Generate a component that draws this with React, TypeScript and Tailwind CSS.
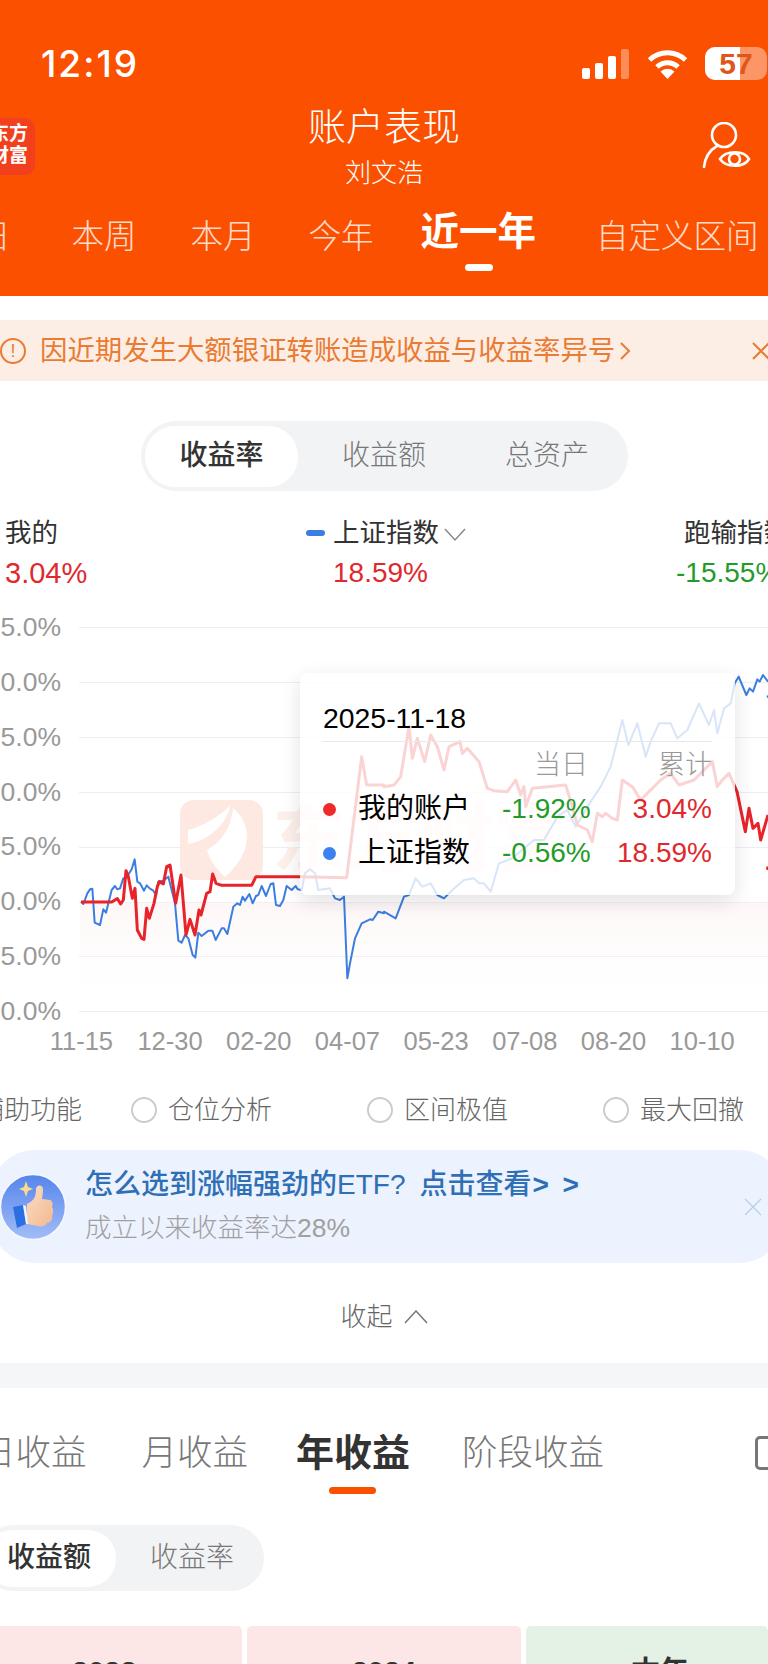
import React from "react";

const redLeft = "243,876 335,876 352,866 362,882 370,870 378,782 385,800 397,865 405,835 412,960 425,985 432,988 440,895 448,925 462,880 472,830 478,815 490,822 500,770 510,765 527,880 543,795 558,975 570,928 585,975 597,900 603,915 620,850 630,845 638,792 648,820 665,826 755,826 768,800 900,800 1040,803 1085,440 1100,525 1152,525";
const redRight: number[][] = [[0,530],[30,525],[50,500],[75,350],[85,445],[100,385],[122,455],[140,375],[160,410],[180,480],[195,410],[228,395],[235,430],[250,415],[285,455],[310,535],[330,542],[370,545],[395,510],[410,555],[420,530],[425,590],[445,535],[545,525],[565,590],[580,645],[610,660],[625,695],[640,610],[655,620],[665,610],[685,625],[700,630],[715,510],[745,530],[770,570],[790,550],[830,510],[860,490],[885,525],[930,510],[985,455],[1000,530],[1015,510],[1035,490],[1059,545],[1084,665],[1095,595],[1107,655],[1122,640],[1130,690],[1152,615]];
const blueLeft = "243,875 250,882 262,850 270,838 277,836 284,938 300,945 310,898 318,908 335,840 345,828 352,838 360,835 370,805 380,802 395,778 404,748 412,815 420,820 432,842 440,826 450,836 460,842 468,855 475,815 490,812 505,800 515,840 525,880 535,992 545,998 555,975 565,985 578,1035 586,1043 595,968 605,978 625,962 637,962 647,990 665,955 672,955 682,972 700,890 712,880 720,885 728,860 735,872 748,852 758,880 768,858 775,855 785,828 798,858 812,822 820,820 828,885 840,888 850,870 860,828 875,840 887,828 893,838 905,840 915,790 930,778 945,790 955,840 990,835 1005,865 1020,870 1032,860 1042,1105 1050,1060 1065,985 1085,940 1110,928 1118,930 1135,905 1152,910";
const blueRight: number[][] = [[0,905],[35,925],[60,860],[75,855],[95,805],[115,830],[140,820],[160,855],[180,865],[205,840],[240,810],[270,805],[285,820],[300,820],[320,845],[345,760],[385,745],[450,690],[480,690],[520,620],[550,600],[575,650],[620,575],[650,530],[680,470],[715,330],[733,405],[760,340],[785,440],[800,395],[825,340],[860,340],[880,385],[910,360],[945,280],[975,345],[990,300],[1000,370],[1020,295],[1040,280],[1052,220],[1064,200],[1087,255],[1097,235],[1107,245],[1120,208],[1127,215],[1137,195],[1152,215]];
const shift = (p: number[][]) => p.map(([x, y]) => `${x + 1152},${y}`).join(" ");

const yLabels = ["25.0%", "20.0%", "15.0%", "10.0%", "5.0%", "0.0%", "-5.0%", "-10.0%"];
const xLabels = ["11-15", "12-30", "02-20", "04-07", "05-23", "07-08", "08-20", "10-10"];

function Wifi() {
  return (
    <svg width="41" height="30" viewBox="0 0 41 30" fill="none" stroke="white" strokeWidth="5">
      <path d="M2.5 11 A 26 26 0 0 1 38.5 11" />
      <path d="M10 18 A 15 15 0 0 1 31 18" />
      <path d="M20.5 30 L13.5 22.5 A 10 10 0 0 1 27.5 22.5 Z" fill="white" stroke="none" />
    </svg>
  );
}

function ThumbIcon() {
  return (
    <svg width="66" height="66" viewBox="0 0 66 66" className="shrink-0">
      <defs>
        <linearGradient id="thumbBg" x1="0" y1="0" x2="0" y2="1">
          <stop offset="0" stopColor="#5585ec" />
          <stop offset="1" stopColor="#a3bdf8" />
        </linearGradient>
        <linearGradient id="skin" x1="0" y1="0" x2="1" y2="1">
          <stop offset="0" stopColor="#fbdcc0" />
          <stop offset="1" stopColor="#f2b993" />
        </linearGradient>
      </defs>
      <circle cx="33" cy="33" r="32.5" fill="url(#thumbBg)" stroke="#f5f8ff" strokeWidth="1.5" />
      <path d="M26 7 L28 13 L33 15 L28 17 L26 23 L24 17 L19 15 L24 13 Z" fill="#f9dd8a" />
      <path d="M27 30 C33 27 36 24 36 15 C37 10 43 11 43 15 C43 20 42 23 42 25 L50 26 C53 27 53 31 52 33 C54 36 53 40 52 42 C53 46 50 49 47 49 C46 52 42 53 38 52 L27 50 Z" fill="url(#skin)" />
      <path d="M13 33 L23 31 L26 50 L17 54 Z" fill="#2c6fe3" />
      <path d="M23 31 L26 32 L28 50 L26 50 Z" fill="#eef4ff" />
    </svg>
  );
}

function PersonEye() {
  return (
    <svg width="50" height="50" viewBox="0 0 50 50" fill="none" stroke="white" strokeWidth="2.6" strokeLinecap="round">
      <circle cx="22" cy="13" r="12" />
      <path d="M15 24 C8 28 3 36 2 45" />
      <path d="M18 37 C24 28 42 28 47 37 C42 46 24 46 18 37 Z" fill="#fa5000" />
      <circle cx="32.5" cy="37" r="5.5" />
    </svg>
  );
}

export default function App() {
  return (
    <div className="relative w-[768px] h-[1664px] overflow-hidden bg-white font-['Liberation_Sans','Noto_Sans_CJK_SC',sans-serif]">
      {/* Header */}
      <header className="h-[296px] bg-[#fa5000] text-white pt-[47px]">
        <div className="flex items-center h-[33px]">
          <span className="ml-[41px] font-['Inter'] text-[37px] leading-[33px] font-medium tracking-[2px]">12:19</span>
          <div className="ml-auto flex items-end gap-[5px] h-[30px]">
            <span className="w-[8px] h-[11px] rounded-[2px] bg-white" />
            <span className="w-[8px] h-[16px] rounded-[2px] bg-white" />
            <span className="w-[8px] h-[23px] rounded-[2px] bg-white" />
            <span className="w-[8px] h-[30px] rounded-[2px] bg-white/35" />
          </div>
          <div className="ml-[18px]"><Wifi /></div>
          <div className="relative ml-[17px] mr-[1px] w-[62px] h-[33px] rounded-[10px] bg-white/40 overflow-hidden">
            <div className="w-[35px] h-full bg-white" />
            <span className="absolute inset-0 flex items-center justify-center text-[30px] font-bold text-[#e0561a]">57</span>
          </div>
        </div>
        <div className="mt-[26px] grid grid-cols-[1fr_auto_1fr] items-start">
          <div className="mt-[12px] w-[55px] ml-[-20px] h-[57px] rounded-[10px] bg-[#f2401f] flex flex-col items-end pr-[7px] pt-[5px] text-[19px] leading-[22px] font-bold">
            <span className="whitespace-nowrap">东方</span>
            <span className="whitespace-nowrap">财富</span>
          </div>
          <div className="text-center">
            <div className="text-[38px] leading-[42px] font-light">账户表现</div>
            <div className="mt-[10px] text-[26px] leading-[30px] font-light">刘文浩</div>
          </div>
          <div className="mt-[16px] mr-[16px] justify-self-end"><PersonEye /></div>
        </div>
        <div className="mt-[24px] flex items-center h-[50px] whitespace-nowrap text-[32.5px] font-light text-white/80">
          <span className="ml-[-22px]">日</span>
          <span className="ml-[61px]">本周</span>
          <span className="ml-[54px]">本月</span>
          <span className="ml-[53px]">今年</span>
          <span className="ml-[47px] text-[38.5px] font-bold text-white -translate-y-[5px]">近一年</span>
          <span className="ml-[60px]">自定义区间</span>
        </div>
        <div className="ml-[465px] mt-[2px] w-[28px] h-[7px] rounded-full bg-white" />
      </header>

      {/* Notice */}
      <div className="mt-[24px] h-[61px] bg-[#fdeee5] flex items-center text-[#e97b33] whitespace-nowrap">
        <span className="w-[26px] h-[26px] rounded-full border-2 border-[#e97b33] flex items-center justify-center text-[18px] leading-none">!</span>
        <span className="ml-[14px] text-[27.4px]">因近期发生大额银证转账造成收益与收益率异号</span>
        <svg width="12" height="24" viewBox="0 0 12 24" fill="none" stroke="#e97b33" strokeWidth="2" className="ml-[4px]"><path d="M2 4 L10 12 L2 20" /></svg>
        <svg width="18" height="18" viewBox="0 0 18 18" fill="none" stroke="#e97b33" strokeWidth="2" className="ml-auto mr-[-2px]"><path d="M1 1 L17 17 M17 1 L1 17" /></svg>
      </div>

      {/* Segmented */}
      <div className="mt-[40px] ml-[141px] w-[487px] h-[70px] rounded-[35px] bg-[#f2f3f5] flex items-center text-[28px] text-[#777] whitespace-nowrap">
        <div className="ml-[4px] w-[153px] h-[61px] rounded-[30px] bg-white flex items-center justify-center font-medium text-[#333]">收益率</div>
        <span className="ml-[44px] font-light">收益额</span>
        <span className="ml-[79px] font-light">总资产</span>
      </div>

      {/* Legend */}
      <div className="mt-[24px] pl-[5px] grid grid-cols-[301px_370px_1fr] whitespace-nowrap text-[26.5px] leading-[36px] text-[#333]">
        <div>
          <div>我的</div>
          <div className="mt-[4px] text-[29px] text-[#e0282e]">3.04%</div>
        </div>
        <div>
          <div className="flex items-center">
            <span className="w-[19px] h-[6px] rounded-full bg-[#3b7de0]" />
            <span className="ml-[8px]">上证指数</span>
            <svg width="22" height="14" viewBox="0 0 22 14" fill="none" stroke="#888" strokeWidth="1.5" className="ml-[5px] mt-[4px]"><path d="M1 1 L11 12 L21 1" /></svg>
          </div>
          <div className="mt-[4px] ml-[27px] text-[28px] text-[#e0282e]">18.59%</div>
        </div>
        <div>
          <div className="ml-[8px]">跑输指数</div>
          <div className="mt-[4px] text-[28px] text-[#1f9c2a]">-15.55%</div>
        </div>
      </div>

      {/* Chart */}
      <div className="relative mt-[9.5px]">
        {yLabels.map((l) => (
          <div key={l} className="flex items-center h-[54.85px]">
            <div className="w-[61px] flex justify-end whitespace-nowrap text-[26.5px] text-[#999]">{l}</div>
            <div className="ml-[18px] flex-1 h-[1px] bg-[#eceef2]" />
          </div>
        ))}
        {/* watermark */}
        <div className="absolute left-[180px] top-[199px] w-[83px] h-[80px] rounded-[14px] bg-[#fde9e2]">
          <svg width="83" height="80" viewBox="0 0 83 80">
            <path d="M8 30 C25 26 40 15 50 6 C48 22 30 40 8 44 Z" fill="white" />
            <path d="M27 50 C42 42 52 25 53 8 C70 22 76 50 45 77 C38 70 30 62 27 50 Z" fill="white" />
          </svg>
        </div>
        <div className="absolute left-[272px] top-[194px] text-[74px] leading-[90px] font-bold text-[#fdf0ea] whitespace-nowrap">东方财富</div>

        <svg width="768" height="440" viewBox="0 0 2304 1320" fill="none" className="absolute left-0 top-[9.5px]">
          <defs>
            <linearGradient id="area" x1="0" y1="0" x2="0" y2="1">
              <stop offset="0" stopColor="#fdeeee" stopOpacity="0.5" />
              <stop offset="1" stopColor="#ffffff" stopOpacity="0" />
            </linearGradient>
          </defs>
          <rect x="240" y="877" width="2064" height="330" fill="url(#area)" />
          <polyline points={`${blueLeft} ${shift(blueRight)}`} stroke="#3b7de0" strokeWidth="6" strokeLinejoin="round" />
          <polyline points={`${redLeft} ${shift(redRight)}`} stroke="#e8232a" strokeWidth="9" strokeLinejoin="round" />
          <circle cx="2304" cy="775" r="6" fill="#e8232a" />
          <circle cx="2304" cy="260" r="4" fill="#3b7de0" />
        </svg>

        {/* Tooltip */}
        <div className="absolute left-[300px] top-[72.5px] w-[435px] h-[222px] rounded-[8px] bg-white/80 shadow-[0_6px_20px_rgba(0,0,0,0.12)] px-[23px] pt-[27px] text-black whitespace-nowrap">
          <div className="text-[28.4px] leading-[36px]">2025-11-18</div>
          <div className="mt-[5px] h-[1px] bg-[#e8e8e8]" />
          <div className="mt-[8px] grid grid-cols-[179px_89px_121px] text-[27px] leading-[30px] font-light text-[#999]">
            <span />
            <span className="text-right pr-[3px]">当日</span>
            <span className="text-right">累计</span>
          </div>
          <div className="mt-[9px] grid grid-cols-[179px_89px_121px] text-[28px] leading-[40px]">
            <span className="flex items-center"><span className="w-[13px] h-[13px] rounded-full bg-[#f02a2a]" /><span className="ml-[22px]">我的账户</span></span>
            <span className="text-[#1f9c2a]">-1.92%</span>
            <span className="text-right text-[#e0282e]">3.04%</span>
          </div>
          <div className="mt-[4px] grid grid-cols-[179px_89px_121px] text-[28px] leading-[40px]">
            <span className="flex items-center"><span className="w-[13px] h-[13px] rounded-full bg-[#3b82f0]" /><span className="ml-[22px]">上证指数</span></span>
            <span className="text-[#1f9c2a]">-0.56%</span>
            <span className="text-right text-[#e0282e]">18.59%</span>
          </div>
        </div>
      </div>

      {/* X labels */}
      <div className="mt-[-13px] ml-[37px] flex text-[25.5px] leading-[30px] text-[#999]">
        {xLabels.map((l) => (
          <span key={l} className="w-[88.7px] shrink-0 text-center">{l}</span>
        ))}
      </div>

      {/* Options */}
      <div className="mt-[39px] h-[30px] flex items-center text-[26px] font-light text-[#666] whitespace-nowrap">
        <span className="ml-[-22px]">辅助功能</span>
        <span className="ml-[49px] w-[26px] h-[26px] rounded-full border-2 border-[#ccc]" />
        <span className="ml-[11px]">仓位分析</span>
        <span className="ml-[95px] w-[26px] h-[26px] rounded-full border-2 border-[#ccc]" />
        <span className="ml-[11px]">区间极值</span>
        <span className="ml-[95px] w-[26px] h-[26px] rounded-full border-2 border-[#ccc]" />
        <span className="ml-[11px]">最大回撤</span>
      </div>

      {/* Banner */}
      <div className="mt-[25px] ml-[-8px] w-[790px] h-[113px] rounded-[42px] bg-[#ecf2fe] flex items-center whitespace-nowrap">
        <div className="ml-[8px]"><ThumbIcon /></div>
        <div className="ml-[19px]">
          <div className="flex text-[28px] leading-[34px] font-medium text-[#2f6fb5]">
            <span>怎么选到涨幅强劲的ETF?</span>
            <span className="ml-[14px]">点击查看</span>
            <span className="ml-[1px] font-bold tracking-[3px]">&gt; &gt;</span>
          </div>
          <div className="mt-[9px] text-[26.5px] leading-[34px] font-light text-[#a0a0a0]">成立以来收益率达28%</div>
        </div>
        <svg width="18" height="18" viewBox="0 0 18 18" fill="none" stroke="#b8cfe8" strokeWidth="1.3" className="ml-auto mr-[20px]"><path d="M1 1 L17 17 M17 1 L1 17" /></svg>
      </div>

      {/* Collapse */}
      <div className="mt-[39px] h-[30px] flex items-center justify-center text-[26px] font-light text-[#666]">
        <span>收起</span>
        <svg width="24" height="14" viewBox="0 0 24 14" fill="none" stroke="#777" strokeWidth="1.5" className="ml-[11px]"><path d="M1 13 L12 1 L23 13" /></svg>
      </div>

      <div className="mt-[31px] h-[25px] bg-[#f5f6f8]" />

      {/* Tabs */}
      <div className="mt-[40px] h-[50px] flex items-center whitespace-nowrap text-[35.5px] font-light text-[#777]">
        <span className="ml-[-20px]">日收益</span>
        <span className="ml-[55px]">月收益</span>
        <span className="ml-[48px] text-[38px] font-bold text-[#333]">年收益</span>
        <span className="ml-[52px]">阶段收益</span>
        <span className="ml-auto mr-[-12px] w-[25px] h-[34px] rounded-[5px] border-[3px] border-[#777]" />
      </div>
      <div className="mt-[9px] ml-[329px] w-[47px] h-[7px] rounded-full bg-[#fa5000]" />

      {/* Segmented 2 */}
      <div className="mt-[31px] ml-[-20px] w-[284px] h-[66px] rounded-[33px] bg-[#f2f3f5] flex items-center text-[28px] text-[#777] whitespace-nowrap">
        <div className="ml-[4px] w-[132px] h-[57px] rounded-[28px] bg-white flex items-center justify-end pr-[25px] font-medium text-[#333]">收益额</div>
        <span className="ml-[34px] font-light">收益率</span>
      </div>

      {/* Cards */}
      <div className="mt-[35px] flex gap-[5px] h-[60px] text-[29px] font-bold text-[#333]">
        <div className="ml-[-20px] w-[262px] pl-[92px] pt-[29px] leading-[34px] rounded-[5px] bg-[#fce6e6]">2023</div>
        <div className="w-[274px] text-center pt-[29px] leading-[34px] rounded-[5px] bg-[#fce6e6]">2024</div>
        <div className="flex-1 pl-[105px] pt-[29px] leading-[34px] rounded-[5px] bg-[#e3f2e4]">本年</div>
      </div>
    </div>
  );
}
